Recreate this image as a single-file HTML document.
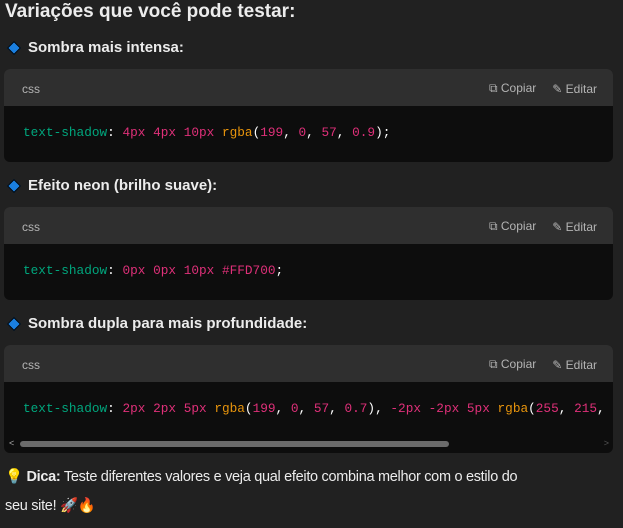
<!DOCTYPE html>
<html><head><meta charset="utf-8"><style>
*{margin:0;padding:0;box-sizing:border-box}
body{width:623px;height:528px;background:#212121;color:#ececec;font-family:"Liberation Sans",sans-serif;position:relative;overflow:hidden}
.t{position:absolute;left:5px;top:0;font-size:19px;font-weight:bold;white-space:nowrap}
.h{position:absolute;left:8px;font-size:15px;font-weight:bold;white-space:nowrap;display:flex;align-items:center}
.dia{width:10px;height:10px;background:#1a7fe0;border:1px solid #000;transform:rotate(45deg);margin-right:9px;margin-left:1px}
.b{position:absolute;left:4px;width:609px;border-radius:6px;overflow:hidden;background:#0d0d0d}
.hd{height:37px;background:#2f2f2f;position:relative;font-size:12px;color:#b4b4b4}
.hd .l{position:absolute;left:18px;top:13px}
.hd .r{position:absolute;right:16px;top:12px;display:flex;gap:16px}
.hd .r span{display:flex;align-items:center;gap:4px}
.code{font-family:"Liberation Mono",monospace;font-size:12.75px;padding-left:19px;white-space:nowrap;color:#fff}
.g{color:#00a67d}.p{color:#df3079}.o{color:#e9950c}
.f{position:absolute;left:5px;font-size:14.5px;letter-spacing:-0.3px;line-height:29px;width:530px}
</style></head><body>
<div class="t" style="top:1px">Variações que você pode testar:</div>
<div class="h" style="top:39px"><span class="dia"></span>Sombra mais intensa:</div>
<div class="b" style="top:69px;height:93px">
 <div class="hd"><span class="l">css</span><span class="r"><span>⧉ Copiar</span><span>✎ Editar</span></span></div>
 <div class="code" style="padding-top:19px"><span class="g">text-shadow</span>: <span class="p">4px 4px 10px</span> <span class="o">rgba</span>(<span class="p">199</span>, <span class="p">0</span>, <span class="p">57</span>, <span class="p">0.9</span>);</div>
</div>
<div class="h" style="top:177px"><span class="dia"></span>Efeito neon (brilho suave):</div>
<div class="b" style="top:207px;height:93px">
 <div class="hd"><span class="l">css</span><span class="r"><span>⧉ Copiar</span><span>✎ Editar</span></span></div>
 <div class="code" style="padding-top:19px"><span class="g">text-shadow</span>: <span class="p">0px 0px 10px #FFD700</span>;</div>
</div>
<div class="h" style="top:315px"><span class="dia"></span>Sombra dupla para mais profundidade:</div>
<div class="b" style="top:345px;height:108px">
 <div class="hd"><span class="l">css</span><span class="r"><span>⧉ Copiar</span><span>✎ Editar</span></span></div>
 <div class="code" style="padding-top:19px"><span class="g">text-shadow</span>: <span class="p">2px 2px 5px</span> <span class="o">rgba</span>(<span class="p">199</span>, <span class="p">0</span>, <span class="p">57</span>, <span class="p">0.7</span>), <span class="p">-2px -2px 5px</span> <span class="o">rgba</span>(<span class="p">255</span>, <span class="p">215</span>,</div>
 <div style="position:absolute;left:16px;top:96px;width:429px;height:6px;border-radius:3px;background:#6b6b6b"></div>
 <div style="position:absolute;left:5px;top:93px;font-size:9px;color:#aaa">&lt;</div>
 <div style="position:absolute;right:4px;top:93px;font-size:9px;color:#555">&gt;</div>
</div>
<div class="f" style="top:463px">💡 <b>Dica:</b> Teste diferentes valores e veja qual efeito combina melhor com o estilo do seu site! 🚀🔥</div>
</body></html>
